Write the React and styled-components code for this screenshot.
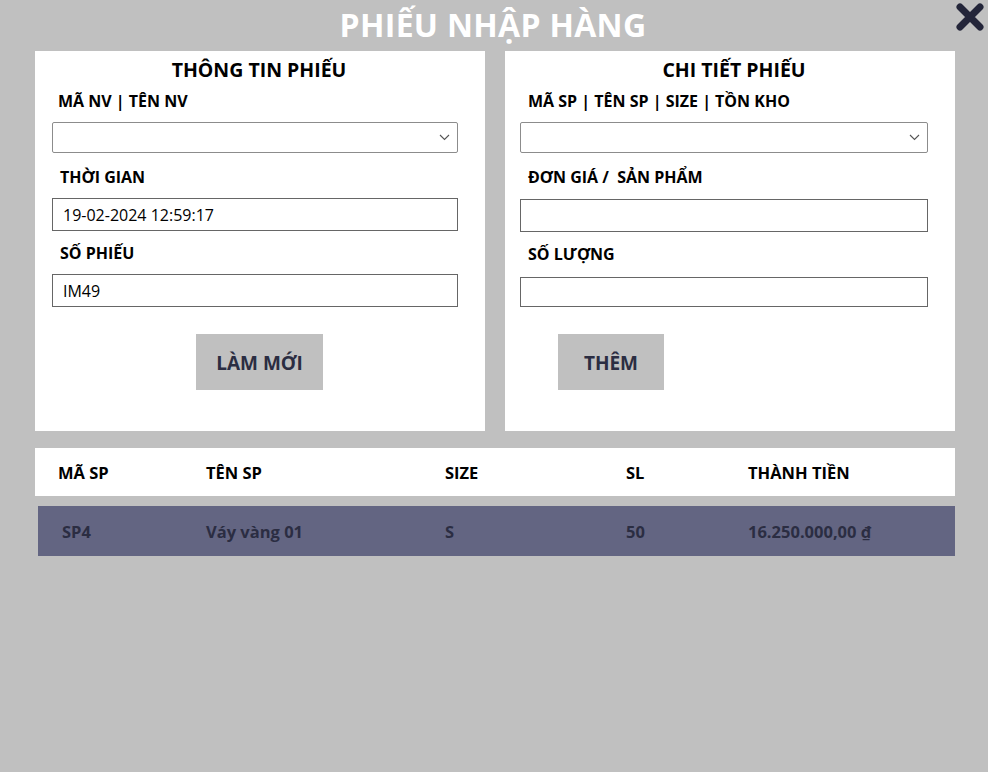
import styled, { createGlobalStyle } from "styled-components";

const GlobalStyle = createGlobalStyle`
    body {
        margin: 0;
        background: #c0c0c0;
        font-family: "Open Sans", "Noto Sans", sans-serif;
    }
`;

const Page = styled.div`
    width: 988px;
    height: 772px;
    background: #c0c0c0;
    box-sizing: border-box;
    padding: 0 33px 0 35px;
`;

const Header = styled.header`
    position: relative;
    height: 51px;
    display: flex;
    justify-content: center;
    align-items: center;
    padding-right: 4px;
`;

const Title = styled.h1`
    margin: 0;
    font-size: 32px;
    font-weight: 700;
    color: #fff;
    letter-spacing: 0.3px;
    transform: translateY(-1px);
`;

const CloseButton = styled.button`
    position: absolute;
    top: 2px;
    right: -31px;
    width: 32px;
    height: 30px;
    padding: 0;
    border: 0;
    background: transparent;
    cursor: pointer;
`;

const Panels = styled.div`
    display: flex;
    gap: 20px;
`;

const Panel = styled.section`
    width: 450px;
    height: 380px;
    background: #fff;
    box-sizing: border-box;
    padding: 6px 27px 0 ${(p) => p.$padLeft || 17}px;
    display: flex;
    flex-direction: column;
`;

const PanelTitle = styled.h2`
    margin: 0 0 7px;
    font-size: 19.5px;
    line-height: 26px;
    font-weight: 700;
    color: #000;
    text-align: center;
    padding-left: ${(p) => p.$shift || 0}px;
`;

const Label = styled.label`
    display: block;
    font-size: 16px;
    line-height: 22px;
    font-weight: 700;
    color: #000;
    padding-left: ${(p) => p.$indent || 8}px;
    margin: ${(p) => p.$mt || 0}px 0 ${(p) => p.$mb || 10}px;
`;

const SelectBox = styled.div`
    height: 31px;
    box-sizing: border-box;
    border: 1px solid #8c8c8c;
    border-radius: 2px;
    display: flex;
    justify-content: flex-end;
    align-items: center;
    padding-right: 7px;
`;

const TextField = styled.input`
    display: block;
    width: 100%;
    height: ${(p) => p.$h || 33}px;
    box-sizing: border-box;
    border: 1px solid #666;
    border-radius: 0;
    padding: 0 10px;
    font-family: "Open Sans", "Noto Sans", sans-serif;
    font-size: 16px;
    color: #000;
    outline: none;
`;

const ButtonRow = styled.div`
    display: flex;
    justify-content: ${(p) => (p.$center ? "center" : "flex-start")};
    padding-left: ${(p) => p.$offset || 0}px;
    margin-top: ${(p) => p.$mt || 27}px;
`;

const ActionButton = styled.button`
    width: ${(p) => p.$w}px;
    height: 56px;
    border: 0;
    padding: 2px 0 0;
    background: #c0c0c0;
    color: #2b2d42;
    font-family: "Open Sans", "Noto Sans", sans-serif;
    font-size: 19px;
    font-weight: 700;
    cursor: pointer;
`;

const Table = styled.div`
    margin-top: 17px;
`;

const HeadRow = styled.div`
    height: 48px;
    background: #fff;
    display: grid;
    grid-template-columns: 148px 239px 181px 122px 1fr;
    align-items: center;
    padding: 0 0 0 23px;
    box-sizing: border-box;
    font-size: 16.5px;
    font-weight: 700;
    color: #000;
`;

const DataRow = styled.div`
    margin: 10px 0 0 3px;
    height: 50px;
    background: #636582;
    display: grid;
    grid-template-columns: 144px 239px 181px 122px 1fr;
    align-items: center;
    padding-left: 24px;
    font-size: 16.5px;
    font-weight: 700;
    color: #2b2d42;
`;

const Chevron = () => (
    <svg width="11" height="7" viewBox="0 0 11 7">
        <path d="M1 1l4.5 4.5L10 1" fill="none" stroke="#555" strokeWidth="1.1" />
    </svg>
);

const CloseIcon = () => (
    <svg width="32" height="30" viewBox="0 0 32 30">
        <path d="M6 5l20 20M26 5L6 25" stroke="#24263a" strokeWidth="7" strokeLinecap="round" />
    </svg>
);

const items = [
    { id: "SP4", name: "Váy vàng 01", size: "S", qty: 50, total: "16.250.000,00 ₫" },
];

export default function App() {
    return (
        <Page>
            <GlobalStyle />
            <Header>
                <Title>PHIẾU NHẬP HÀNG</Title>
                <CloseButton aria-label="Đóng">
                    <CloseIcon />
                </CloseButton>
            </Header>

            <Panels>
                <Panel>
                    <PanelTitle $shift={8}>THÔNG TIN PHIẾU</PanelTitle>
                    <Label $indent={6}>MÃ NV | TÊN NV</Label>
                    <SelectBox>
                        <Chevron />
                    </SelectBox>
                    <Label $mt={13}>THỜI GIAN</Label>
                    <TextField defaultValue="19-02-2024 12:59:17" />
                    <Label $mt={11}>SỐ PHIẾU</Label>
                    <TextField defaultValue="IM49" />
                    <ButtonRow $center $offset={9}>
                        <ActionButton $w={127}>LÀM MỚI</ActionButton>
                    </ButtonRow>
                </Panel>

                <Panel $padLeft={15}>
                    <PanelTitle $shift={20}>CHI TIẾT PHIẾU</PanelTitle>
                    <Label>MÃ SP | TÊN SP | SIZE | TỒN KHO</Label>
                    <SelectBox>
                        <Chevron />
                    </SelectBox>
                    <Label $mt={13} $mb={11}>ĐƠN GIÁ /&nbsp; SẢN PHẨM</Label>
                    <TextField />
                    <Label $mt={11} $mb={12}>SỐ LƯỢNG</Label>
                    <TextField $h={30} />
                    <ButtonRow $offset={38}>
                        <ActionButton $w={106}>THÊM</ActionButton>
                    </ButtonRow>
                </Panel>
            </Panels>

            <Table>
                <HeadRow>
                    <span>MÃ SP</span>
                    <span>TÊN SP</span>
                    <span>SIZE</span>
                    <span>SL</span>
                    <span>THÀNH TIỀN</span>
                </HeadRow>
                {items.map((it) => (
                    <DataRow key={it.id}>
                        <span>{it.id}</span>
                        <span>{it.name}</span>
                        <span>{it.size}</span>
                        <span>{it.qty}</span>
                        <span>{it.total}</span>
                    </DataRow>
                ))}
            </Table>
        </Page>
    );
}
